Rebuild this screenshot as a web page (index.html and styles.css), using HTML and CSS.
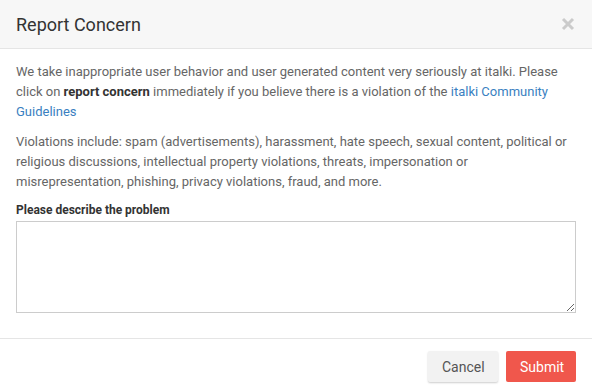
FILE: index.html
```html
<!DOCTYPE html>
<html>
<head>
<meta charset="utf-8">
<link rel="stylesheet" href="styles.css">
</head>
<body>
<div class="modal">
  <div class="header">
    <h1 class="title">Report Concern</h1>
    <svg class="close" width="14" height="14" viewBox="0 0 14 14"><path d="M2 2 L12 12 M12 2 L2 12" stroke="#cbcbcb" stroke-width="3" stroke-linecap="butt"/></svg>
  </div>
  <div class="body">
    <p class="para">We take inappropriate user behavior and user generated content very seriously at italki. Please click on <b>report concern</b> immediately if you believe there is a violation of the <a class="link" href="#">italki Community Guidelines</a></p>
    <p class="para">Violations include: spam (advertisements), harassment, hate speech, sexual content, political or religious discussions, intellectual property violations, threats, impersonation or misrepresentation, phishing, privacy violations, fraud, and more.</p>
    <label class="label">Please describe the problem</label>
    <textarea class="input"></textarea>
  </div>
  <div class="footer">
    <button class="btn cancel">Cancel</button>
    <button class="btn submit">Submit</button>
  </div>
</div>
</body>
</html>
```
FILE: styles.css
```css
* { box-sizing: border-box; }
html, body { margin: 0; padding: 0; background: #fff; }
body { font-family: Roboto, "Liberation Sans", sans-serif; width: 592px; height: 391px; overflow: hidden; }
.modal { display: flex; flex-direction: column; }
.header {
  height: 49px;
  background: #f7f7f7;
  border-bottom: 1px solid #e5e5e5;
  display: flex;
  align-items: center;
  justify-content: space-between;
  padding: 0 17px 0 16px;
}
.title { margin: 0; font-size: 18px; font-weight: 400; color: #333; }
.close { display: block; }
.body { padding: 13px 16px 0 16px; }
.para { margin: 0 0 10px 0; font-size: 13px; line-height: 20px; color: #666; }
.para b { color: #333; font-weight: 700; }
.link { color: #3a7fc1; text-decoration: none; }
.label { display: block; font-size: 12px; font-weight: 700; color: #333; margin-top: 8px; line-height: 16px; }
.input {
  display: block;
  width: 560px;
  height: 92px;
  margin-top: 3px;
  border: 1px solid #ccc;
  border-radius: 0;
  resize: vertical;
}
.footer {
  margin-top: 25px;
  border-top: 1px solid #e5e5e5;
  display: flex;
  justify-content: flex-end;
  gap: 8px;
  padding: 12px 16px 0 16px;
}
.btn {
  height: 31px;
  border: none;
  border-radius: 2px;
  font-family: Roboto, "Liberation Sans", sans-serif;
  font-size: 14px;
  padding: 0 14px;
}
.cancel { background: #f2f2f2; color: #555; box-shadow: 0 1px 2px rgba(0,0,0,0.2); width: 70px; }
.submit { background: #f0574c; color: #fff; width: 70px; }
```
